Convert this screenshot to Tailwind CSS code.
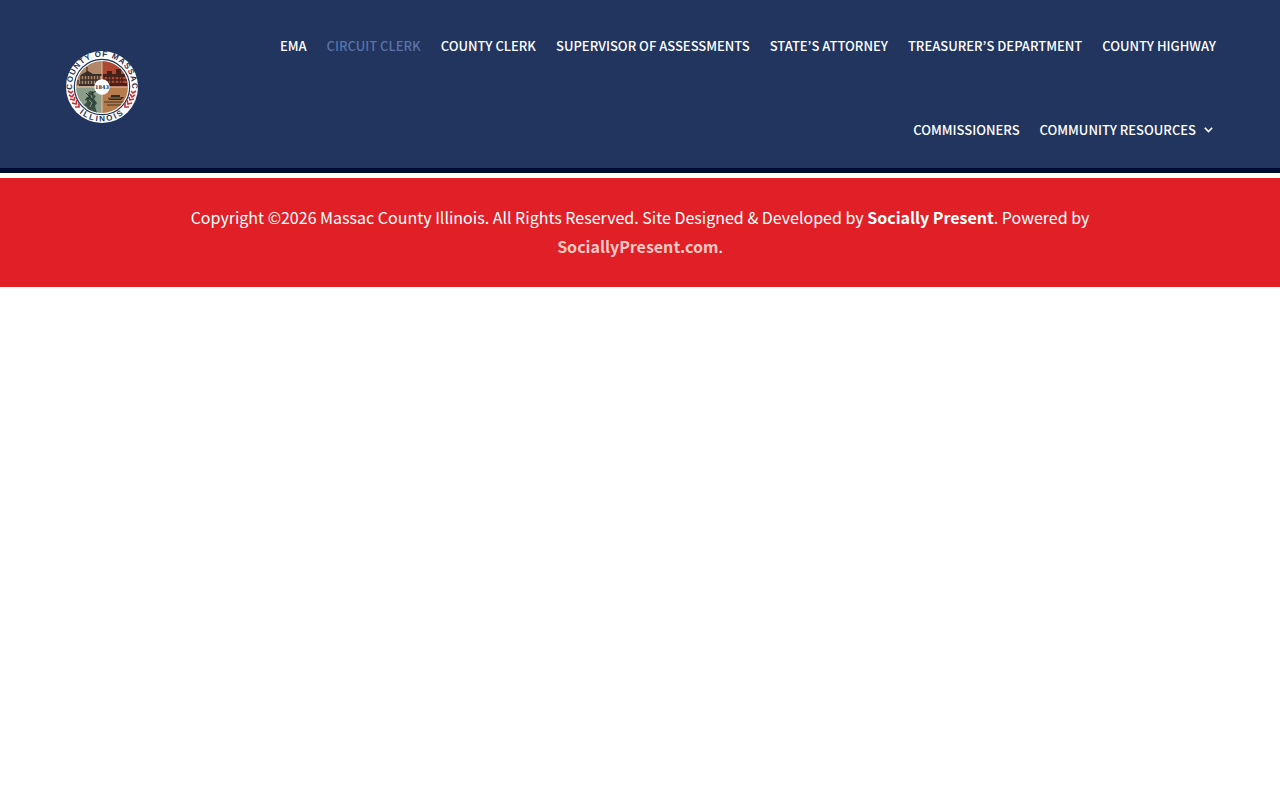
<!DOCTYPE html>
<html lang="en">
<head>
  <meta charset="UTF-8">
  <meta name="viewport" content="width=device-width, initial-scale=1.0">
  <title>Circuit Clerk - Massac County Illinois</title>
  <script src="https://cdn.jsdelivr.net/npm/@tailwindcss/browser@4"></script>
</head>
<body class="bg-white font-['Noto_Sans_CJK_KR','Open_Sans',sans-serif]">
  <header class="bg-[#21355f] border-b-5 border-[#000b33] flex items-center justify-between pl-[65px] pr-16">
    <a href="#" aria-label="Massac County home" class="shrink-0 mt-1.5">
      <svg class="size-[74px]" viewBox="0 0 74 74">
        <defs>
          <path id="arc-top" d="M8.500 46A30 30 0 1 1 65.500 46" />
          <path id="arc-bottom" d="M2.500 37a34.500 34.500 0 0 0 69 0" />
          <clipPath id="disc"><circle cx="37" cy="37" r="26" /></clipPath>
        </defs>
        <circle cx="37" cy="37" r="36" fill="#fff" />
        <circle cx="37" cy="37" r="27.7" fill="#fff" stroke="#1d3156" stroke-width="1.2" />
        <g clip-path="url(#disc)">
          <path d="M10 10h27v27H10z" fill="#b28768" />
          <path d="M37 10h27v27H37z" fill="#ad4931" />
          <path d="M10 37h27v27H10z" fill="#8a9d88" />
          <path d="M37 37h27v27H37z" fill="#b77c4c" />
          <!-- courthouse -->
          <path d="M17 24l6-3 5 3h9v2H15zM14 34h23v2H14z" fill="#382f2b" />
          <path d="M16 26v9m3-9v9m3-9v9m3-9v9m3-9v9m3-9v9m3-9v9M15 30h21" stroke="#382f2b" stroke-width="1.5" />
          <path d="M22 17v5M13 30v5" stroke="#241f1e" />
          <!-- fort -->
          <path d="M38 24h4v-3h5v3h4v-5h5v5h4v3H38zM38 33h24v3H38z" fill="#472019" />
          <path d="M39 26v8m4-8v8m3-8v8m4-8v8m4-8v8m3-8v8M38 30h24" stroke="#472019" stroke-width="1.5" />
          <!-- statue -->
          <path d="M24 63l-2-6-3-2 3-3-1-4 3-2-1-3 2-2 3 1 1 3 2 1-2 3 3 4-2 3 2 7z" fill="#3b4e43" />
          <path d="M21 43l4 4-5 3m8-9-2 7 4 5-5 4m-8 1 6 2m5-17 3-2" stroke="#26382f" fill="none" />
          <path d="M24 50l3 3-2 4m1-12 1 3" stroke="#8a9d88" fill="none" />
          <!-- riverboat -->
          <path d="M43 48l3-1v-2h9v2h4l-3 3H44z" fill="#342b24" />
          <path d="M39 52h25M42 55h20" stroke="#3e3022" />
          <path d="M44 48h12" stroke="#c99d70" stroke-width=".7" />
          <path d="M37 10v54M10 37h54" stroke="#e4dacb" stroke-width=".8" />
        </g>
        <circle cx="37" cy="37" r="7.7" fill="#fff" />
        <text x="37" y="39" text-anchor="middle" class="font-['DejaVu_Serif',serif] text-[5px] font-bold" fill="#172444">1843</text>
        <text class="font-['Liberation_Sans',sans-serif] text-[8px] tracking-[1px] font-bold" fill="#1d3156" text-anchor="middle"><textPath href="#arc-top" startOffset="50%">COUNTY OF MASSAC</textPath></text>
        <text class="font-['Liberation_Sans',sans-serif] text-[8px] tracking-[2px] font-bold" fill="#1d3156" text-anchor="middle"><textPath href="#arc-bottom" startOffset="50%">ILLINOIS</textPath></text>
        <g fill="none" stroke="#d42b32" stroke-width="1.6">
          <path d="M3 41l3 2 2-2M4 45l3 2 2-3M5 49l4 1 1-3M7 53l4 1 1-4M10 57l4 0 0-4" />
          <path d="M71 41l-3 2-2-2M70 45l-3 2-2-3M69 49l-4 1-1-3M67 53l-4 1-1-4M64 57l-4 0 0-4" />
        </g>
      </svg>
    </a>
    <nav class="max-w-[980px]">
      <ul class="flex flex-wrap justify-end gap-x-5 text-[13px] leading-[84px] font-medium text-white whitespace-nowrap">
        <li class="pt-1 -mb-1"><a href="#">EMA</a></li>
        <li class="pt-1 -mb-1"><a href="#" class="text-[#5a72a8]">CIRCUIT CLERK</a></li>
        <li class="pt-1 -mb-1"><a href="#">COUNTY CLERK</a></li>
        <li class="pt-1 -mb-1"><a href="#">SUPERVISOR OF ASSESSMENTS</a></li>
        <li class="pt-1 -mb-1"><a href="#">STATE’S ATTORNEY</a></li>
        <li class="pt-1 -mb-1"><a href="#">TREASURER’S DEPARTMENT</a></li>
        <li class="pt-1 -mb-1"><a href="#">COUNTY HIGHWAY</a></li>
        <li class="pt-1 -mb-1"><a href="#">COMMISSIONERS</a></li>
        <li class="pt-1 -mb-1">
          <a href="#" class="flex items-center gap-2 pr-[3px]">COMMUNITY RESOURCES
            <svg class="w-[9px] h-[6px]" viewBox="0 0 9 6" fill="none" stroke="currentColor" stroke-width="1.6"><path d="M.8.8l3.700 3.700L8.200.8" /></svg>
          </a>
        </li>
      </ul>
    </nav>
  </header>
  <footer class="mt-[5px] bg-[#e01f26] text-white text-center pt-[25px] pb-[26px] px-16">
    <p class="max-w-[920px] mx-auto text-base leading-[29px]">
      Copyright ©2026 Massac County Illinois. All Rights Reserved. Site Designed &amp; Developed by <strong>Socially Present</strong>. Powered by <a href="#" class="font-bold text-[#ffc9c5]">SociallyPresent.com</a>.
    </p>
  </footer>
</body>
</html>
